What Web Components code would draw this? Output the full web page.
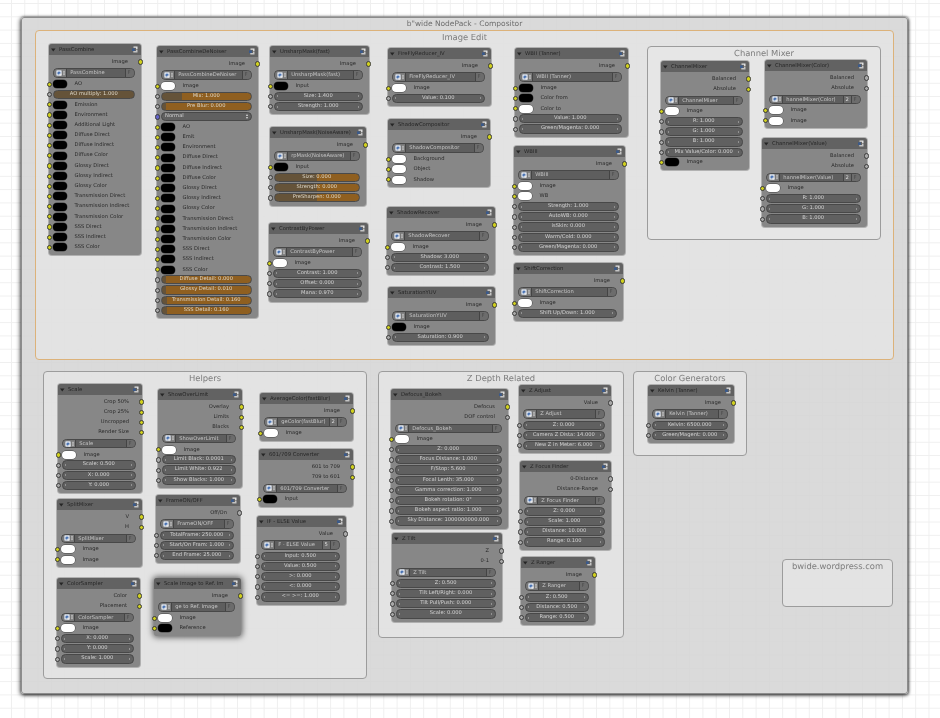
<!DOCTYPE html>
<html>
<head>
<meta charset="utf-8">
<title>NodePack</title>
<style>
  html, body { margin: 0; padding: 0; background: #fff; }
  body { font-family: "DejaVu Sans", sans-serif; overflow: hidden; }
</style>
</head>
<body>
<node-canvas>
  <node-frame outer x="21" y="17" w="887" h="677" label='b"wide NodePack - Compositor'></node-frame>
  <node-frame x="35" y="30" w="859" h="330" label="Image Edit"></node-frame>
  <node-frame x="647" y="46" w="234" h="194" label="Channel Mixer"></node-frame>
  <node-frame x="43" y="371" w="324" h="308" label="Helpers"></node-frame>
  <node-frame x="378" y="371" w="246" h="267" label="Z Depth Related"></node-frame>
  <node-frame x="633" y="371" w="114" h="85" label="Color Generators"></node-frame>
  <node-frame x="782" y="559" w="111" h="48" label="bwide.wordpress.com"></node-frame>

  <bl-node x="49" y="44" w="92" label="PassCombine">
    <bl-out label="Image"></bl-out>
    <bl-sel name="PassCombine"></bl-sel>
    <bl-swatch label="AO"></bl-swatch>
    <bl-slider label="AO multiply: 1.000" from="100"></bl-slider>
    <bl-swatch label="Emission"></bl-swatch>
    <bl-swatch label="Environment"></bl-swatch>
    <bl-swatch label="Additional Light"></bl-swatch>
    <bl-swatch label="Diffuse Direct"></bl-swatch>
    <bl-swatch label="Diffuse Indirect"></bl-swatch>
    <bl-swatch label="Diffuse Color"></bl-swatch>
    <bl-swatch label="Glossy Direct"></bl-swatch>
    <bl-swatch label="Glossy Indirect"></bl-swatch>
    <bl-swatch label="Glossy Color"></bl-swatch>
    <bl-swatch label="Transmission Direct"></bl-swatch>
    <bl-swatch label="Transmission Indirect"></bl-swatch>
    <bl-swatch label="Transmission Color"></bl-swatch>
    <bl-swatch label="SSS Direct"></bl-swatch>
    <bl-swatch label="SSS Indirect"></bl-swatch>
    <bl-swatch label="SSS Color"></bl-swatch>
  </bl-node>

  <bl-node x="157" y="46" w="101" label="PassCombineDeNoiser">
    <bl-out label="Image"></bl-out>
    <bl-sel name="PassCombineDeNoiser"></bl-sel>
    <bl-swatch label="Image" white></bl-swatch>
    <bl-slider label="Mix: 1.000" from="22"></bl-slider>
    <bl-slider label="Pre Blur: 0.000" from="5"></bl-slider>
    <bl-vec label="Normal"></bl-vec>
    <bl-swatch label="AO"></bl-swatch>
    <bl-swatch label="Emit"></bl-swatch>
    <bl-swatch label="Environment"></bl-swatch>
    <bl-swatch label="Diffuse Direct"></bl-swatch>
    <bl-swatch label="Diffuse Indirect"></bl-swatch>
    <bl-swatch label="Diffuse Color"></bl-swatch>
    <bl-swatch label="Glossy Direct"></bl-swatch>
    <bl-swatch label="Glossy Indirect"></bl-swatch>
    <bl-swatch label="Glossy Color"></bl-swatch>
    <bl-swatch label="Transmission Direct"></bl-swatch>
    <bl-swatch label="Transmission Indirect"></bl-swatch>
    <bl-swatch label="Transmission Color"></bl-swatch>
    <bl-swatch label="SSS Direct"></bl-swatch>
    <bl-swatch label="SSS Indirect"></bl-swatch>
    <bl-swatch label="SSS Color"></bl-swatch>
    <bl-slider label="Diffuse Detail: 0.000" from="5"></bl-slider>
    <bl-slider label="Glossy Detail: 0.010" from="5"></bl-slider>
    <bl-slider label="Transmission Detail: 0.160" from="6"></bl-slider>
    <bl-slider label="SSS Detail: 0.160" from="6"></bl-slider>
  </bl-node>

  <bl-node x="270" y="46" w="99" label="UnsharpMask(fast)">
    <bl-out label="Image"></bl-out>
    <bl-sel name="UnsharpMask(fast)"></bl-sel>
    <bl-swatch label="Input"></bl-swatch>
    <bl-num label="Size: 1.400"></bl-num>
    <bl-num label="Strength: 1.000"></bl-num>
  </bl-node>

  <bl-node x="270" y="127" w="96" label="UnsharpMask(NoiseAware)">
    <bl-out label="Image"></bl-out>
    <bl-sel name="rpMask(NoiseAware)"></bl-sel>
    <bl-swatch label="Input"></bl-swatch>
    <bl-slider label="Size: 0.000" from="50"></bl-slider>
    <bl-slider label="Strength: 0.000" from="50"></bl-slider>
    <bl-slider label="PreSharpen: 0.000" from="50"></bl-slider>
  </bl-node>

  <bl-node x="269" y="223" w="99" label="ContrastByPower">
    <bl-out label="Image"></bl-out>
    <bl-sel name="ContrastByPower"></bl-sel>
    <bl-swatch label="Image" white></bl-swatch>
    <bl-num label="Contrast: 1.000"></bl-num>
    <bl-num label="Offset: 0.000"></bl-num>
    <bl-num label="Mana: 0.970"></bl-num>
  </bl-node>

  <bl-node x="388" y="48" w="103" label="FireFlyReducer_IV">
    <bl-out label="Image"></bl-out>
    <bl-sel name="FireFlyReducer_IV"></bl-sel>
    <bl-swatch label="Image" white></bl-swatch>
    <bl-num label="Value: 0.100"></bl-num>
  </bl-node>

  <bl-node x="388" y="119" w="102" label="ShadowCompositor">
    <bl-out label="Image"></bl-out>
    <bl-sel name="ShadowCompositor"></bl-sel>
    <bl-swatch label="Background" white></bl-swatch>
    <bl-swatch label="Object" white></bl-swatch>
    <bl-swatch label="Shadow" white></bl-swatch>
  </bl-node>

  <bl-node x="387" y="207" w="108" label="ShadowRecover">
    <bl-out label="Image"></bl-out>
    <bl-sel name="ShadowRecover"></bl-sel>
    <bl-swatch label="Image" white></bl-swatch>
    <bl-num label="Shadow: 3.000"></bl-num>
    <bl-num label="Contrast: 1.500"></bl-num>
  </bl-node>

  <bl-node x="388" y="287" w="107" label="SaturationYUV">
    <bl-out label="Image"></bl-out>
    <bl-sel name="SaturationYUV"></bl-sel>
    <bl-swatch label="Image"></bl-swatch>
    <bl-num label="Saturation: 0.900"></bl-num>
  </bl-node>

  <bl-node x="515" y="48" w="113" label="WBII  (Tanner)">
    <bl-out label="Image"></bl-out>
    <bl-sel name="WBII  (Tanner)"></bl-sel>
    <bl-swatch label="Image"></bl-swatch>
    <bl-swatch label="Color from"></bl-swatch>
    <bl-swatch label="Color to" white></bl-swatch>
    <bl-num label="Value: 1.000"></bl-num>
    <bl-num label="Green/Magenta: 0.000"></bl-num>
  </bl-node>

  <bl-node x="514" y="146" w="111" label="WBIII">
    <bl-out label="Image"></bl-out>
    <bl-sel name="WBIII"></bl-sel>
    <bl-swatch label="Image" white></bl-swatch>
    <bl-swatch label="WB" white></bl-swatch>
    <bl-num label="Strength: 1.000"></bl-num>
    <bl-num label="AutoWB: 0.000"></bl-num>
    <bl-num label="isSkin: 0.000"></bl-num>
    <bl-num label="Warm/Cold: 0.000"></bl-num>
    <bl-num label="Green/Magenta: 0.000"></bl-num>
  </bl-node>

  <bl-node x="514" y="263" w="109" label="ShiftCorrection">
    <bl-out label="Image"></bl-out>
    <bl-sel name="ShiftCorrection"></bl-sel>
    <bl-swatch label="Image" white></bl-swatch>
    <bl-num label="Shift Up/Down: 1.000"></bl-num>
  </bl-node>

  <bl-node x="661" y="61" w="88" label="ChannelMixer">
    <bl-out label="Balanced"></bl-out>
    <bl-out label="Absolute"></bl-out>
    <bl-sel name="ChannelMixer"></bl-sel>
    <bl-swatch label="Image" white></bl-swatch>
    <bl-num label="R: 1.000"></bl-num>
    <bl-num label="G: 1.000"></bl-num>
    <bl-num label="B: 1.000"></bl-num>
    <bl-num label="Mix Value/Color: 0.000"></bl-num>
    <bl-swatch label="Image"></bl-swatch>
  </bl-node>

  <bl-node x="765" y="60" w="102" label="ChannelMixer(Color)">
    <bl-out label="Balanced" hollow></bl-out>
    <bl-out label="Absolute" hollow></bl-out>
    <bl-sel name="hannelMixer(Color)" count="2"></bl-sel>
    <bl-swatch label="Image" white></bl-swatch>
    <bl-swatch label="Image" white></bl-swatch>
  </bl-node>

  <bl-node x="762" y="138" w="105" label="ChannelMixer(Value)">
    <bl-out label="Balanced" hollow></bl-out>
    <bl-out label="Absolute" hollow></bl-out>
    <bl-sel name="hannelMixer(Value)" count="2"></bl-sel>
    <bl-swatch label="Image" white></bl-swatch>
    <bl-num label="R: 1.000"></bl-num>
    <bl-num label="G: 1.000"></bl-num>
    <bl-num label="B: 1.000"></bl-num>
  </bl-node>

  <bl-node x="58" y="384" w="84" label="Scale">
    <bl-out label="Crop 50%"></bl-out>
    <bl-out label="Crop 25%"></bl-out>
    <bl-out label="Uncropped"></bl-out>
    <bl-out label="Render Size"></bl-out>
    <bl-sel name="Scale"></bl-sel>
    <bl-swatch label="Image" white></bl-swatch>
    <bl-num label="Scale: 0.500"></bl-num>
    <bl-num label="X: 0.000"></bl-num>
    <bl-num label="Y: 0.000"></bl-num>
  </bl-node>

  <bl-node x="57" y="499" w="85" label="SplitMixer">
    <bl-out label="V"></bl-out>
    <bl-out label="H"></bl-out>
    <bl-sel name="SplitMixer"></bl-sel>
    <bl-swatch label="Image" white></bl-swatch>
    <bl-swatch label="Image" white></bl-swatch>
  </bl-node>

  <bl-node x="57" y="578" w="83" label="ColorSampler">
    <bl-out label="Color"></bl-out>
    <bl-out label="Placement"></bl-out>
    <bl-sel name="ColorSampler"></bl-sel>
    <bl-swatch label="Image" white></bl-swatch>
    <bl-num label="X: 0.000"></bl-num>
    <bl-num label="Y: 0.000"></bl-num>
    <bl-num label="Scale: 1.000"></bl-num>
  </bl-node>

  <bl-node x="158" y="389" w="84" label="ShowOverLimit">
    <bl-out label="Overlay"></bl-out>
    <bl-out label="Limits"></bl-out>
    <bl-out label="Blacks"></bl-out>
    <bl-sel name="ShowOverLimit"></bl-sel>
    <bl-swatch label="Image" white></bl-swatch>
    <bl-num label="Limit Black: 0.0001"></bl-num>
    <bl-num label="Limit White: 0.922"></bl-num>
    <bl-num label="Show Blacks: 1.000"></bl-num>
  </bl-node>

  <bl-node x="156" y="495" w="84" label="FrameON/OFF">
    <bl-out label="Off/On" hollow></bl-out>
    <bl-sel name="FrameON/OFF"></bl-sel>
    <bl-num label="TotalFrame: 250.000"></bl-num>
    <bl-num label="Start/On Fram: 1.000"></bl-num>
    <bl-num label="End Frame: 25.000"></bl-num>
  </bl-node>

  <bl-node x="154" y="578" w="87" label="Scale Image to Ref. Im" selected>
    <bl-out label="Image"></bl-out>
    <bl-sel name="ge to Ref. Image"></bl-sel>
    <bl-swatch label="Image" white></bl-swatch>
    <bl-swatch label="Reference"></bl-swatch>
  </bl-node>

  <bl-node x="260" y="393" w="93" label="AverageColor(fastBlur)">
    <bl-out label="Image"></bl-out>
    <bl-sel name="geColor(fastBlur)" count="2"></bl-sel>
    <bl-swatch label="Image" white></bl-swatch>
  </bl-node>

  <bl-node x="259" y="449" w="94" label="601/709 Converter">
    <bl-out label="601 to 709"></bl-out>
    <bl-out label="709 to 601"></bl-out>
    <bl-sel name="601/709 Converter"></bl-sel>
    <bl-swatch label="Input"></bl-swatch>
  </bl-node>

  <bl-node x="257" y="516" w="89" label="IF - ELSE Value">
    <bl-out label="Value" hollow></bl-out>
    <bl-sel name="F - ELSE Value" count="5"></bl-sel>
    <bl-num label="Input: 0.500"></bl-num>
    <bl-num label="Value: 0.500"></bl-num>
    <bl-num label="&gt;: 0.000"></bl-num>
    <bl-num label="&lt;: 0.000"></bl-num>
    <bl-num label="&lt;= &gt;=: 1.000"></bl-num>
  </bl-node>

  <bl-node x="391" y="389" w="117" label="Defocus_Bokeh">
    <bl-out label="Defocus"></bl-out>
    <bl-out label="DOF control" hollow></bl-out>
    <bl-sel name="Defocus_Bokeh"></bl-sel>
    <bl-swatch label="Image" white></bl-swatch>
    <bl-num label="Z: 0.000"></bl-num>
    <bl-num label="Focus Distance: 1.000"></bl-num>
    <bl-num label="F/Stop: 5.600"></bl-num>
    <bl-num label="Focal Lenth: 35.000"></bl-num>
    <bl-num label="Gamma correction: 1.000"></bl-num>
    <bl-num label="Bokeh rotation: 0°"></bl-num>
    <bl-num label="Bokeh aspect ratio: 1.000"></bl-num>
    <bl-num label="Sky Distance: 1000000000.000"></bl-num>
  </bl-node>

  <bl-node x="392" y="533" w="110" label="Z Tilt">
    <bl-out label="Z" hollow></bl-out>
    <bl-out label="0-1" hollow></bl-out>
    <bl-sel name="Z Tilt"></bl-sel>
    <bl-num label="Z: 0.500"></bl-num>
    <bl-num label="Tilt Left/Right: 0.000"></bl-num>
    <bl-num label="Tilt Pull/Push: 0.000"></bl-num>
    <bl-num label="Scale: 0.000"></bl-num>
  </bl-node>

  <bl-node x="519" y="385" w="92" label="Z Adjust">
    <bl-out label="Value" hollow></bl-out>
    <bl-sel name="Z Adjust"></bl-sel>
    <bl-num label="Z: 0.000"></bl-num>
    <bl-num label="Camera Z Dista: 14.000"></bl-num>
    <bl-num label="New Z in Meter: 6.000"></bl-num>
  </bl-node>

  <bl-node x="520" y="461" w="91" label="Z Focus Finder">
    <bl-out label="0-Distance" hollow></bl-out>
    <bl-out label="Distance-Range" hollow></bl-out>
    <bl-sel name="Z Focus Finder"></bl-sel>
    <bl-num label="Z: 0.000"></bl-num>
    <bl-num label="Scale: 1.000"></bl-num>
    <bl-num label="Distance: 10.000"></bl-num>
    <bl-num label="Range: 0.100"></bl-num>
  </bl-node>

  <bl-node x="521" y="557" w="74" label="Z Ranger">
    <bl-out label="Image"></bl-out>
    <bl-sel name="Z Ranger"></bl-sel>
    <bl-num label="Z: 0.500"></bl-num>
    <bl-num label="Distance: 0.500"></bl-num>
    <bl-num label="Range: 0.500"></bl-num>
  </bl-node>

  <bl-node x="648" y="385" w="86" label="Kelvin (Tanner)">
    <bl-out label="Image"></bl-out>
    <bl-sel name="Kelvin (Tanner)"></bl-sel>
    <bl-num label="Kelvin: 6500.000"></bl-num>
    <bl-num label="Green/Magent: 0.000"></bl-num>
  </bl-node>
</node-canvas>

<script>
// shared bits for all the node rows
const ROW_CSS = `
  :host { display: block; position: relative; height: 10.2px; box-sizing: border-box; font-size: 5.2px; line-height: 10.2px; text-rendering: geometricPrecision; white-space: nowrap; }
  .sock { position: absolute; top: 2.7px; width: 3.2px; height: 3.2px; border-radius: 50%; border: 0.8px solid #3c3c3c; background: #cfcf1e; }
  .sock.in { left: -2.4px; }
  .sock.out { right: -2.4px; }
  .sock.grey { background: #a8a8a8; }
  .sock.blue { background: #6363c7; }
`;

const ARROWS = `
  .arr { position: absolute; top: 2.6px; width: 0; height: 0; border: 1.4px solid transparent; }
  .arr.l { left: 2.4px; border-left: 0; border-right-color: #c4c4c4; }
  .arr.r { right: 2.4px; border-right: 0; border-left-color: #c4c4c4; }
`;

const esc = s => (s || '').replace(/&/g, '&amp;').replace(/</g, '&lt;').replace(/>/g, '&gt;');

class NodeCanvas extends HTMLElement {
  constructor() {
    super();
    this.attachShadow({ mode: 'open' });
    this.shadowRoot.innerHTML = `
      <style>
        :host {
          display: block;
          position: relative;
          width: 940px;
          height: 718px;
          overflow: hidden;
          filter: blur(0.5px);
          background-color: #fff;
          background-image:
            linear-gradient(#efefef 1px, transparent 1px),
            linear-gradient(90deg, #efefef 1px, transparent 1px);
          background-size: 13.3px 13.3px;
          background-position: 11px 3px;
        }
      </style>
      <slot></slot>
    `;
  }
}

class NodeFrame extends HTMLElement {
  constructor() {
    super();
    this.attachShadow({ mode: 'open' });
  }

  connectedCallback() {
    const outer = this.hasAttribute('outer');
    const tan = this.getAttribute('label') === 'Image Edit';
    this.style.left = this.getAttribute('x') + 'px';
    this.style.top = this.getAttribute('y') + 'px';
    this.style.width = this.getAttribute('w') + 'px';
    this.style.height = this.getAttribute('h') + 'px';
    this.shadowRoot.innerHTML = `
      <style>
        :host {
          display: block;
          position: absolute;
          box-sizing: border-box;
          border: 1.2px solid ${outer ? '#8c8c8c' : tan ? '#dcb27a' : '#9c9c9c'};
          border-radius: ${outer ? 3 : 4}px;
          background: ${outer ? 'rgba(212,212,212,.85)' : 'rgba(232,232,232,.62)'};
          ${outer ? 'box-shadow: -1px 1px 4px rgba(0,0,0,.65), 1px 1px 3px rgba(0,0,0,.55), 0 -1px 2px rgba(0,0,0,.2);' : ''}
          text-align: center;
        }
        .t {
          font-size: ${outer ? 7.5 : 8.4}px;
          line-height: ${outer ? 12 : 13}px;
          color: ${outer ? '#6d6d6d' : '#7c7c7c'};
          text-rendering: geometricPrecision;
          white-space: nowrap;
        }
      </style>
      <div class="t">${esc(this.getAttribute('label'))}</div>
    `;
  }
}

class BlNode extends HTMLElement {
  constructor() {
    super();
    this.attachShadow({ mode: 'open' });
  }

  connectedCallback() {
    const sel = this.hasAttribute('selected');
    this.style.left = this.getAttribute('x') + 'px';
    this.style.top = this.getAttribute('y') + 'px';
    this.style.width = this.getAttribute('w') + 'px';
    this.shadowRoot.innerHTML = `
      <style>
        :host {
          display: block;
          position: absolute;
          box-sizing: border-box;
          background: #878787;
          border-radius: 3px;
          color: #2a2a2a;
          box-shadow: ${sel ? '0 0 6px 1px rgba(0,0,0,.65)' : '0 0 0 1px rgba(135,135,135,.55)'};
        }
        .head {
          display: flex;
          align-items: center;
          gap: 3.5px;
          height: 11px;
          padding: 0 3px 0 2px;
          background: #626262;
          border-radius: 3px 3px 0 0;
          font-size: 5.3px;
          text-rendering: geometricPrecision;
          color: #262626;
          white-space: nowrap;
        }
        .head span { flex: 1; overflow: hidden; }
        .body { padding: 1.8px 0 2.6px; }
      </style>
      <div class="head">
        <svg width="4.5" height="4" viewBox="0 0 4.5 4"><polygon points="0,.4 4.5,.4 2.25,3.6" fill="#252525"/></svg>
        <span>${esc(this.getAttribute('label'))}</span>
        <svg width="6" height="7" viewBox="0 0 6 7">
          <path d="M1.5 .5h4v2.4h-1.4v-1.2h-2.6z" fill="#e4e4e4"/>
          <path d="M4 3.6h1.5v2.9h-4.2v-1.5h2.7z" fill="#c4c4c4"/>
          <rect x="0" y="2.4" width="2.8" height="2.6" fill="#3a5a8c"/>
        </svg>
      </div>
      <div class="body"><slot></slot></div>
    `;
  }
}

// output socket row, label on the right
class BlOut extends HTMLElement {
  constructor() {
    super();
    this.attachShadow({ mode: 'open' });
  }

  connectedCallback() {
    const hollow = this.hasAttribute('hollow');
    this.shadowRoot.innerHTML = `
      <style>
        ${ROW_CSS}
        :host { text-align: right; padding-right: 13px; }
      </style>
      ${esc(this.getAttribute('label'))}
      <div class="sock out ${hollow ? 'grey' : ''}"></div>
    `;
  }
}

// datablock selector: icon, name, user count, fake user
class BlSel extends HTMLElement {
  constructor() {
    super();
    this.attachShadow({ mode: 'open' });
  }

  connectedCallback() {
    const count = this.getAttribute('count');
    this.shadowRoot.innerHTML = `
      <style>
        :host {
          display: block;
          box-sizing: border-box;
          height: 9.4px;
          margin: 1.4px 6.5px 1.4px 4px;
          font-size: 5.2px;
          line-height: 8px;
          text-rendering: geometricPrecision;
          white-space: nowrap;
        }
        .pill {
          display: flex;
          height: 100%;
          box-sizing: border-box;
          border: .7px solid #484848;
          border-radius: 4.5px;
          background: #5e5e5e;
          color: #c6c6c6;
          overflow: hidden;
        }
        .ico {
          display: flex;
          align-items: center;
          gap: 1px;
          padding: 0 1.2px 0 2px;
          background: #787878;
          border-right: .7px solid #444;
          flex: none;
        }
        .name { flex: 1; padding-left: 3px; overflow: hidden; }
        .cnt { flex: none; width: 6.5px; text-align: center; background: #6c6c6c; border-left: .7px solid #444; color: #ddd; }
        .f { flex: none; width: 7px; text-align: center; background: #6c6c6c; border-left: .7px solid #444; color: #4c4c4c; padding-right: 1px; }
      </style>
      <div class="pill">
        <div class="ico">
          <svg width="6" height="6" viewBox="0 0 6 6">
            <rect x=".3" y=".3" width="5.4" height="5.4" rx=".8" fill="#d8dfea"/>
            <circle cx="3" cy="3" r="1.6" fill="#4a74b4"/>
            <rect x="3.4" y="3.6" width="2" height="2" fill="#e8e8e8"/>
          </svg>
          <svg width="2" height="6" viewBox="0 0 2 6"><path d="M1 .3L2 2.4H0zM1 5.7L2 3.6H0z" fill="#ddd"/></svg>
        </div>
        <div class="name">${esc(this.getAttribute('name'))}</div>
        ${count ? `<div class="cnt">${esc(count)}</div>` : ''}
        <div class="f">F</div>
      </div>
    `;
  }
}

// input socket with a colour swatch
class BlSwatch extends HTMLElement {
  constructor() {
    super();
    this.attachShadow({ mode: 'open' });
  }

  connectedCallback() {
    const white = this.hasAttribute('white');
    this.shadowRoot.innerHTML = `
      <style>
        ${ROW_CSS}
        :host { display: flex; align-items: center; padding-left: 4px; gap: 8px; }
        .col { width: 13.5px; height: 8px; border-radius: 4px; flex: none; background: ${white ? '#fff' : '#000'}; box-shadow: 0 0 0 .5px #444; }
      </style>
      <div class="sock in"></div>
      <div class="col"></div>
      <span>${esc(this.getAttribute('label'))}</span>
    `;
  }
}

// number field with arrows at both ends
class BlNum extends HTMLElement {
  constructor() {
    super();
    this.attachShadow({ mode: 'open' });
  }

  connectedCallback() {
    this.shadowRoot.innerHTML = `
      <style>
        ${ROW_CSS}
        ${ARROWS}
        :host { padding: .5px 6.5px .5px 4px; }
        .pill {
          position: relative;
          height: 100%;
          box-sizing: border-box;
          border: .7px solid #484848;
          border-radius: 4.5px;
          background: #606060;
          color: #d2d2d2;
          text-align: center;
          line-height: 7.8px;
          overflow: hidden;
        }
      </style>
      <div class="sock in grey"></div>
      <div class="pill"><i class="arr l"></i>${esc(this.getAttribute('label'))}<i class="arr r"></i></div>
    `;
  }
}

// orange factor slider, "from" is where the filled part starts
class BlSlider extends HTMLElement {
  constructor() {
    super();
    this.attachShadow({ mode: 'open' });
  }

  connectedCallback() {
    const from = this.getAttribute('from') || '6';
    this.shadowRoot.innerHTML = `
      <style>
        ${ROW_CSS}
        :host { padding: .5px 6.5px .5px 4px; }
        .pill {
          height: 100%;
          box-sizing: border-box;
          border: .7px solid #4a4a4a;
          border-radius: 4.5px;
          background: linear-gradient(90deg, #655339 ${from}%, #8f5f20 ${from}%);
          color: #dcd6c8;
          text-align: center;
          line-height: 7.8px;
          overflow: hidden;
        }
      </style>
      <div class="sock in grey"></div>
      <div class="pill">${esc(this.getAttribute('label'))}</div>
    `;
  }
}

// vector socket, shown as a small drop-down
class BlVec extends HTMLElement {
  constructor() {
    super();
    this.attachShadow({ mode: 'open' });
  }

  connectedCallback() {
    this.shadowRoot.innerHTML = `
      <style>
        ${ROW_CSS}
        :host { padding: .5px 6.5px .5px 4px; }
        .pill {
          height: 100%;
          box-sizing: border-box;
          border: .7px solid #484848;
          border-radius: 4.5px;
          background: #606060;
          color: #d2d2d2;
          padding: 0 3px;
          display: flex;
          justify-content: space-between;
          align-items: center;
          line-height: 7.8px;
        }
        svg { flex: none; }
      </style>
      <div class="sock in blue"></div>
      <div class="pill">
        <span>${esc(this.getAttribute('label'))}</span>
        <svg width="2" height="5" viewBox="0 0 2 5"><path d="M1 0L2 2H0zM1 5L2 3H0z" fill="#ddd"/></svg>
      </div>
    `;
  }
}

customElements.define('node-canvas', NodeCanvas);
customElements.define('node-frame', NodeFrame);
customElements.define('bl-node', BlNode);
customElements.define('bl-out', BlOut);
customElements.define('bl-sel', BlSel);
customElements.define('bl-swatch', BlSwatch);
customElements.define('bl-num', BlNum);
customElements.define('bl-slider', BlSlider);
customElements.define('bl-vec', BlVec);
</script>
</body>
</html>
